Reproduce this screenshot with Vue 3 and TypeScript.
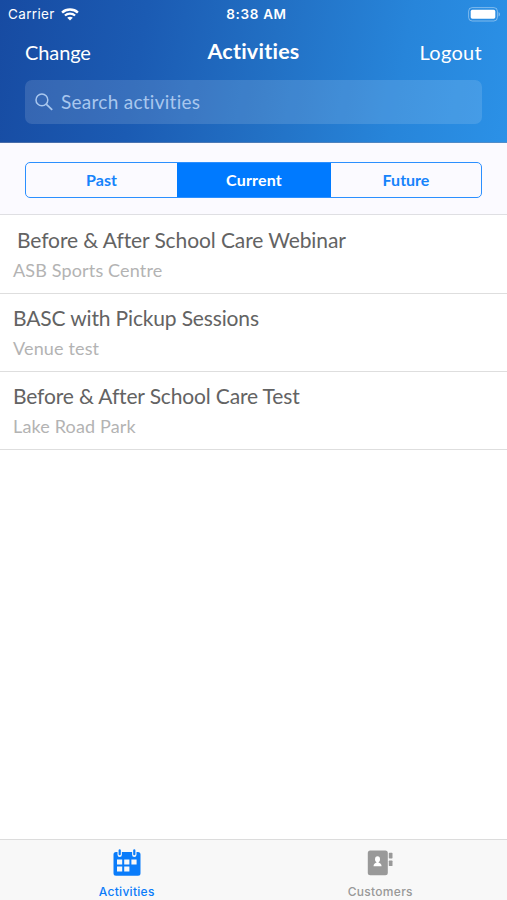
<script setup lang="ts">
import { ref } from 'vue'

interface Activity {
  title: string
  venue: string
  indented?: boolean
}

const periods: string[] = ['Past', 'Current', 'Future']
const selected = ref<string>('Current')
const query = ref<string>('')

const activities: Activity[] = [
  { title: 'Before & After School Care Webinar', venue: 'ASB Sports Centre', indented: true },
  { title: 'BASC with Pickup Sessions', venue: 'Venue test' },
  { title: 'Before & After School Care Test', venue: 'Lake Road Park' },
]
</script>

<template>
  <div class="screen">
    <header class="header">
      <div class="status">
        <div class="carrier">
          <span>Carrier</span>
          <svg class="wifi" width="18" height="13" viewBox="0 0 18 13" fill="none" stroke="#fff">
            <path d="M1.100 4.600C5.500.600 12.500.600 16.900 4.600" stroke-width="2.500" />
            <path d="M3.900 7.500C6.800 4.900 11.200 4.900 14.100 7.500" stroke-width="2.200" />
            <path d="M9 12.500 6.200 9.700C7.800 8.300 10.200 8.300 11.800 9.700Z" fill="#fff" stroke="none" />
          </svg>
        </div>
        <span class="clock">8:38 AM</span>
        <svg class="battery" width="33" height="15" viewBox="0 0 33 15">
          <rect x=".6" y=".6" width="28.800" height="13.400" rx="3.600" fill="none" stroke="#fff" stroke-opacity=".4" />
          <rect x="2.700" y="2.800" width="24.600" height="8.900" rx="1.600" fill="#fff" />
          <path d="M30.600 5v4.600c1.800-.8 1.800-3.800 0-4.600Z" fill="#fff" fill-opacity=".45" />
        </svg>
      </div>
      <nav class="navbar">
        <span class="nav-action">Change</span>
        <h1 class="title">Activities</h1>
        <span class="nav-action end">Logout</span>
      </nav>
      <label class="search">
        <svg width="18" height="18" viewBox="0 0 18 18" fill="none" stroke="#a9c7ee" stroke-width="1.500">
          <circle cx="6.900" cy="6.900" r="5.900" />
          <path d="m11.200 11.200 6 5.600" stroke-width="1.800" />
        </svg>
        <input v-model="query" type="text" placeholder="Search activities" />
      </label>
    </header>

    <div class="filter">
      <div class="segments">
        <button
          v-for="period in periods"
          :key="period"
          type="button"
          class="segment"
          :class="{ active: period === selected }"
          @click="selected = period"
        >
          {{ period }}
        </button>
      </div>
    </div>

    <ul class="list">
      <li v-for="activity in activities" :key="activity.title" class="row">
        <div class="name" :class="{ indented: activity.indented }">{{ activity.title }}</div>
        <div class="venue">{{ activity.venue }}</div>
      </li>
    </ul>

    <footer class="tabs">
      <div class="tab active">
        <svg width="28" height="28" viewBox="0 0 28 28">
          <path
            fill="currentColor"
            fill-rule="evenodd"
            d="M3 3h1.500v2.800a2.200 2.200 0 0 0 4.400 0V3h10.200v2.800a2.200 2.200 0 0 0 4.400 0V3h1.500a2.500 2.500 0 0 1 2.500 2.500v18.800a2.500 2.500 0 0 1-2.500 2.500H3a2.500 2.500 0 0 1-2.500-2.500V5.500A2.500 2.500 0 0 1 3 3ZM4 10.500v5h5.200v-5Zm7.200 0v5h5.200v-5Zm7.200 0v5h5.200v-5ZM4 17.600v5h5.200v-5Zm7.200 0v5h5.200v-5Z"
          />
          <rect x="5.600" y=".3" width="2.200" height="6" rx="1.100" fill="currentColor" />
          <rect x="20.200" y=".3" width="2.200" height="6" rx="1.100" fill="currentColor" />
        </svg>
        <span>Activities</span>
      </div>
      <div class="tab">
        <svg width="28" height="28" viewBox="0 0 28 28">
          <rect x="1.800" y="1.400" width="20" height="24.800" rx="2.500" fill="currentColor" />
          <rect x="22.800" y="3.800" width="3.700" height="5.600" rx=".7" fill="currentColor" />
          <rect x="22.800" y="11.500" width="3.700" height="5.600" rx=".7" fill="currentColor" />
          <ellipse cx="11.500" cy="10.300" rx="2.500" ry="3" fill="#fff" />
          <path d="M7.500 17.300c0-2.400 1.600-3.100 3-3.700v-2h2v2c1.500.6 3.100 1.300 3.100 3.700Z" fill="#fff" />
        </svg>
        <span>Customers</span>
      </div>
    </footer>
  </div>
</template>

<style>
body {
  margin: 0;
  background: #fff;
}
</style>

<style scoped>
.screen {
  display: flex;
  flex-direction: column;
  height: 900px;
  box-sizing: border-box;
  background: #fff;
  font-family: Lato, 'Liberation Sans', sans-serif;
  font-variant-ligatures: none;
}

.header {
  box-sizing: border-box;
  height: 143px;
  color: #fff;
  background: linear-gradient(100deg, #174ba2 0%, #1b5bb3 28%, #2270c4 53%, #2785da 78%, #2b91e7 100%);
  border-bottom: 1px solid rgba(120, 140, 175, 0.5);
}

.status {
  display: grid;
  grid-template-columns: 1fr auto 1fr;
  align-items: center;
  height: 27px;
  padding: 0 6px 0 8px;
  font: 500 13px/27px Inter, 'Liberation Sans', sans-serif;
}

.carrier {
  display: flex;
  align-items: center;
  gap: 6px;
  font-size: 13.5px;
  font-weight: 400;
  letter-spacing: 0.35px;
}

.carrier span {
  padding-top: 1px;
}

.clock {
  padding: 1px 0 0 4px;
  font-size: 13.5px;
  font-weight: 600;
  letter-spacing: 0.65px;
}

.battery {
  justify-self: end;
}

.navbar {
  display: grid;
  grid-template-columns: 1fr auto 1fr;
  align-items: center;
  height: 49px;
  padding: 0 25px;
}

.nav-action {
  font-size: 20px;
  letter-spacing: -0.1px;
}

.end {
  text-align: right;
  letter-spacing: 0.3px;
}

.title {
  margin: 0 0 1px;
  font-size: 21.5px;
  font-weight: 700;
  letter-spacing: 0.25px;
}

.search {
  display: flex;
  align-items: center;
  gap: 8px;
  box-sizing: border-box;
  height: 44px;
  margin: 4px 25px 0;
  padding: 0 10px;
  border-radius: 7px;
  background: rgba(255, 255, 255, 0.13);
}

.search input {
  flex: 1;
  min-width: 0;
  padding: 0;
  border: 0;
  outline: 0;
  background: transparent;
  color: #fff;
  font: 400 19px/24px Lato, 'Liberation Sans', sans-serif;
  font-variant-ligatures: none;
  letter-spacing: 0.27px;
}

.search input::placeholder {
  color: #a9c7ee;
  opacity: 1;
}

.filter {
  box-sizing: border-box;
  height: 72px;
  padding: 19px 25px 0;
  background: #fbfaff;
  border-bottom: 1px solid #dfdfe3;
}

.segments {
  display: grid;
  grid-template-columns: 151px 154px 1fr;
  box-sizing: border-box;
  height: 36px;
  overflow: hidden;
  border: 1px solid #2b8fff;
  border-radius: 5px;
}

.segment {
  padding: 0;
  border: 0;
  background: transparent;
  color: #1683fb;
  font: 700 16px/34px Lato, 'Liberation Sans', sans-serif;
}

.segment.active {
  background: #007aff;
  color: #fff;
  letter-spacing: 0.2px;
}

.list {
  flex: 1;
  margin: 0;
  padding: 0;
  list-style: none;
}

.row {
  box-sizing: border-box;
  height: 78px;
  padding: 10px 13px 0;
  border-bottom: 1px solid #dedede;
}

.row:first-child {
  height: 79px;
  padding-top: 11px;
}

.name {
  color: #636363;
  font-size: 21px;
  line-height: 28px;
  letter-spacing: -0.15px;
}

.name.indented {
  padding-left: 4px;
  letter-spacing: -0.1px;
}

.venue {
  margin-top: 4px;
  color: #b3b3b3;
  font-size: 18px;
  line-height: 24px;
  letter-spacing: 0.15px;
}

.tabs {
  display: grid;
  grid-template-columns: 1fr 1fr;
  box-sizing: border-box;
  height: 61px;
  border-top: 1px solid #dcdcdc;
  background: #f8f8f8;
}

.tab {
  display: flex;
  flex-direction: column;
  align-items: center;
  padding-top: 9px;
  color: #999;
  font: 500 12px/16px Inter, 'Liberation Sans', sans-serif;
  letter-spacing: 0.3px;
}

.tab span {
  margin-top: 7px;
}

.tab.active {
  color: #0a7cfa;
}
</style>
